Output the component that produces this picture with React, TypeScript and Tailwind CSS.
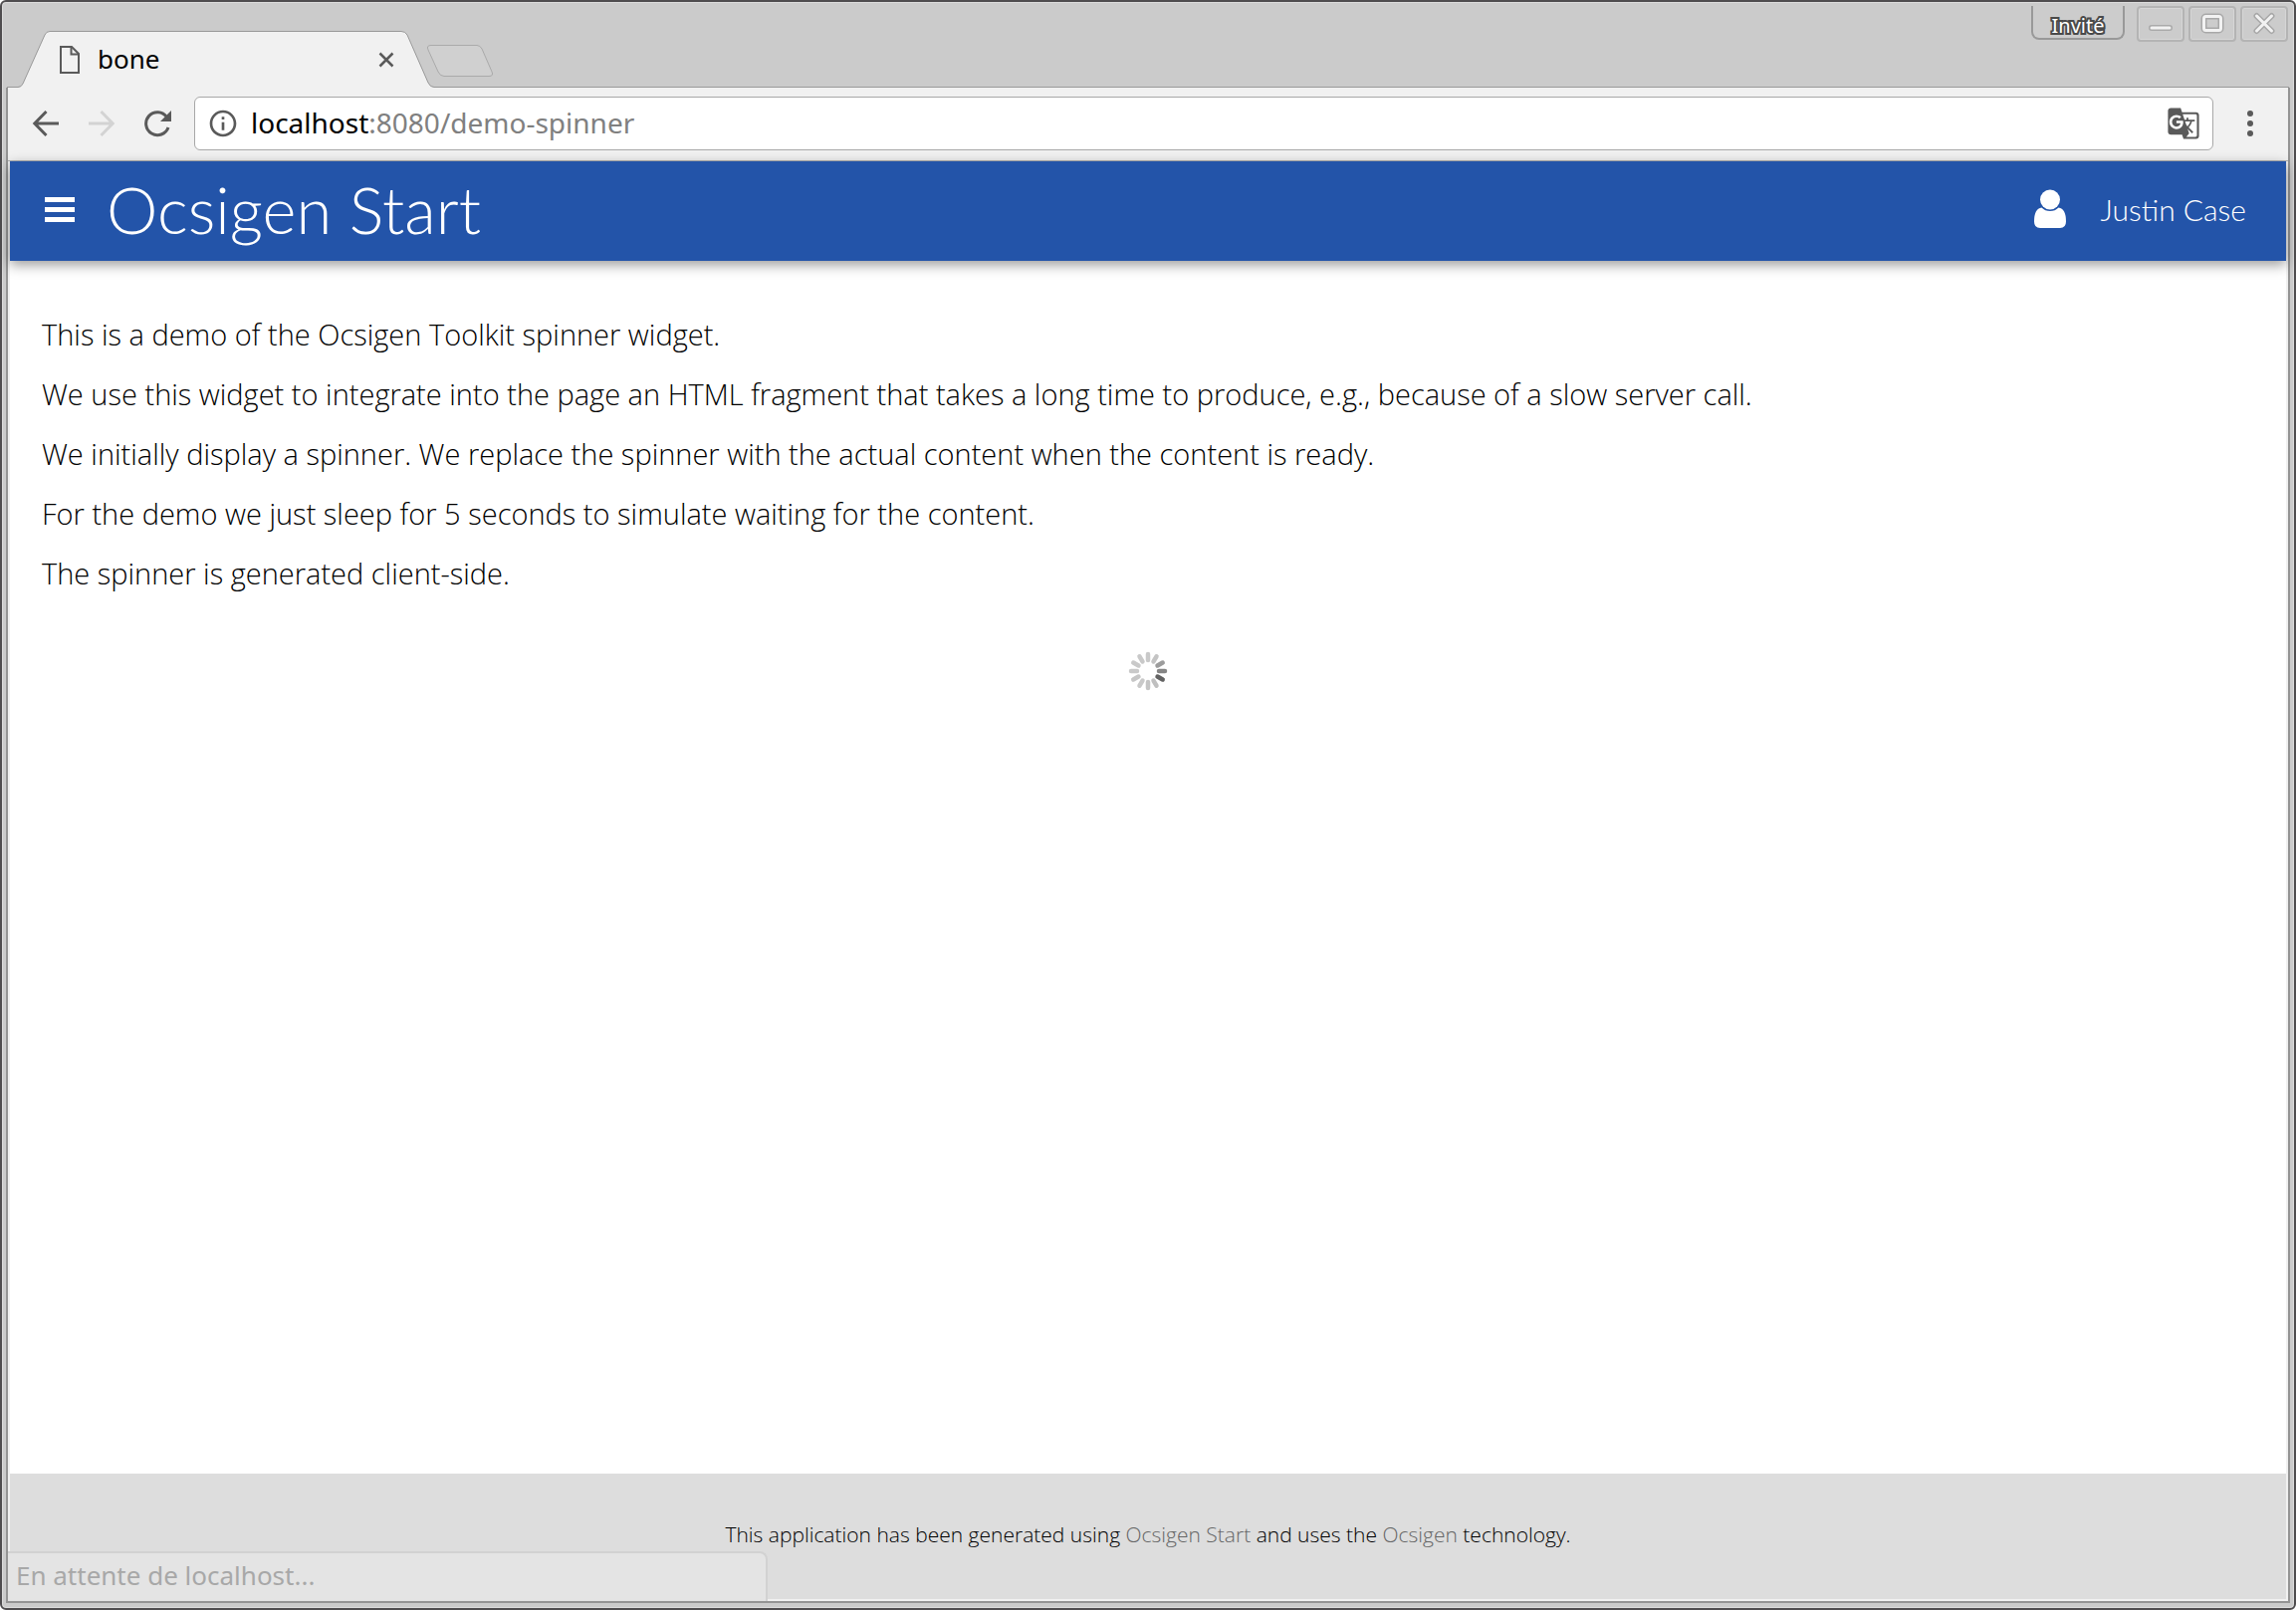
import React from "react";
import { MdGTranslate, MdInfoOutline } from "react-icons/md";

const paragraphs = [
  "This is a demo of the Ocsigen Toolkit spinner widget.",
  "We use this widget to integrate into the page an HTML fragment that takes a long time to produce, e.g., because of a slow server call.",
  "We initially display a spinner. We replace the spinner with the actual content when the content is ready.",
  "For the demo we just sleep for 5 seconds to simulate waiting for the content.",
  "The spinner is generated client-side.",
];

// One colour per spoke, clockwise from twelve o'clock.
const spokeColors = [
  "#c9c9c9", "#c4c4c4", "#9c9c9c", "#858585", "#626262", "#c0c0c0",
  "#c4c4c4", "#c9c9c9", "#c6c6c6", "#c9c9c9", "#c9c9c9", "#c9c9c9",
];

function Spinner() {
  return (
    <svg role="img" aria-label="Loading" className="size-10" viewBox="-20 -20 40 40">
      {spokeColors.map((color, i) => (
        <line key={i} x1="0" y1="-11" x2="0" y2="-17" stroke={color} strokeWidth="4.500" strokeLinecap="round" transform={`rotate(${i * 30})`} />
      ))}
    </svg>
  );
}

function WindowButton({ label, children }: { label: string; children: React.ReactNode }) {
  return (
    <button type="button" aria-label={label} className="flex h-9 w-12 items-center justify-center rounded-sm border-2 border-[#b4b4b4] bg-[#cccccc] shadow-[inset_0_0_0_1px_#d6d6d6]">
      <svg className="h-7 w-8" viewBox="0 0 32 28" fill="none" strokeLinejoin="round" strokeLinecap="round">
        {children}
      </svg>
    </button>
  );
}

function TitleBar() {
  return (
    <div className="relative mx-[5px] flex h-[86px] items-start justify-between border-b border-[#999999]">
      <svg className="absolute top-0 left-0 h-[86px] w-[495px]" viewBox="7 2 495 86" fill="none" aria-hidden="true">
        <path d="M7 87.500H18Q21.500 87.500 23 84L45 35Q46.500 31.500 50 31.500H403Q407 31.500 409 35L430 83Q432 87.500 436 87.500V88H7Z" fill="#f1f1f1" />
        <path d="M7 87.500H18Q21.500 87.500 23 84L45 35Q46.500 31.500 50 31.500H403Q407 31.500 409 35L430 83Q432 87.500 436 87.500" stroke="#999" />
        <path d="M433 45.500H479Q482 45.500 484 49L494 72Q496 76.500 491 76.500H446Q442 76.500 440 72L430 50Q428 45.500 433 45.500Z" fill="#d0d0d0" stroke="#aaa" />
      </svg>
      <div className="relative mt-[30px] flex h-14 w-[389px] items-center gap-[18px] pl-[53px]">
        <svg className="h-7 w-5 shrink-0" viewBox="0 0 20 28" fill="none" stroke="#5a5a5a" strokeWidth="2" aria-hidden="true">
          <path d="M1 1H12L19 8V27H1Z" />
          <path d="M11.500 1V8.500H19" />
        </svg>
        <span className="flex-1 pb-0.5 text-[26px] leading-9 text-black">bone</span>
        <button type="button" aria-label="Close tab" className="flex">
          <svg className="size-4" viewBox="0 0 16 16" fill="none" stroke="#5a5a5a" strokeWidth="2.500">
            <path d="M1.500 1.500L14.500 14.500M14.500 1.500L1.500 14.500" />
          </svg>
        </button>
      </div>
      <div className="mt-1 mr-px flex items-start gap-1">
        <button type="button" className="mr-2 h-[34px] w-[94px] rounded-b-lg border-2 border-t-0 border-[#999999] bg-[#cccccc] pt-1 text-[20px] leading-8 text-white [-webkit-text-stroke:4px_#4a4a4a] [paint-order:stroke_fill]">
          Invité
        </button>
        <WindowButton label="Minimize">
          <path d="M7 18H25" stroke="#aaaaaa" strokeWidth="6" />
          <path d="M7 18H25" stroke="#f2f2f2" strokeWidth="3" />
        </WindowButton>
        <WindowButton label="Maximize">
          <rect x="7.500" y="6.500" width="17" height="14" rx="2" stroke="#a8a8a8" strokeWidth="6" />
          <rect x="7.500" y="6.500" width="17" height="14" rx="2" stroke="#f2f2f2" strokeWidth="3" />
        </WindowButton>
        <WindowButton label="Close">
          <path d="M8.500 6L23.500 21M23.500 6L8.500 21" stroke="#a8a8a8" strokeWidth="6" />
          <path d="M8.500 6L23.500 21M23.500 6L8.500 21" stroke="#f2f2f2" strokeWidth="3" />
        </WindowButton>
      </div>
    </div>
  );
}

function Toolbar() {
  return (
    <div className="flex h-[74px] items-center border-b border-[#b0b0b0] bg-[#f1f1f1] pr-[35px] pb-0.5 pl-6">
      <div className="flex gap-7">
        <button type="button" aria-label="Back">
          <svg className="size-7" viewBox="0 0 28 28" fill="none" stroke="#5a5a5a" strokeWidth="3">
            <path d="M27 14H4M14.500 2L2.800 14L14.500 26" />
          </svg>
        </button>
        <button type="button" aria-label="Forward" disabled>
          <svg className="size-7" viewBox="0 0 28 28" fill="none" stroke="#d3d3d3" strokeWidth="3">
            <path d="M1 14H24M13.500 2L25.200 14L13.500 26" />
          </svg>
        </button>
        <button type="button" aria-label="Reload">
          <svg className="size-7" viewBox="0 0 28 28" fill="none">
            <path d="M23.500 7.500A11.500 11.500 0 1 0 25 18" stroke="#5a5a5a" strokeWidth="3" />
            <path d="M28 1V12H17Z" fill="#5a5a5a" />
          </svg>
        </button>
      </div>
      <div className="ml-[23px] flex h-[54px] flex-1 items-center rounded-md border border-[#a8a8a8] bg-white px-3">
        <MdInfoOutline className="size-8 shrink-0 text-[#5a5a5a]" />
        <div className="flex-1 pb-0.5 pl-3 text-[28px] leading-10 text-[#808080]">
          <span className="text-black">localhost</span>:8080/demo-spinner
        </div>
        <button type="button" aria-label="Translate this page">
          <MdGTranslate className="size-[34px] text-[#5a5a5a]" />
        </button>
      </div>
      <button type="button" aria-label="Menu" className="ml-[34px] flex flex-col gap-1">
        <span className="size-1.5 rounded-full bg-[#5a5a5a]" />
        <span className="size-1.5 rounded-full bg-[#5a5a5a]" />
        <span className="size-1.5 rounded-full bg-[#5a5a5a]" />
      </button>
    </div>
  );
}

function PageHeader() {
  return (
    <header className="relative flex h-[100px] items-center bg-[#2354a9] pr-10 pb-1 pl-[35px] font-['Lato',sans-serif] font-light text-white shadow-[0_4px_12px_rgba(0,0,0,0.4)]">
      <button type="button" aria-label="Open menu" className="flex flex-col gap-[5px]">
        <span className="h-[5px] w-[30px] bg-white" />
        <span className="h-[5px] w-[30px] bg-white" />
        <span className="h-[5px] w-[30px] bg-white" />
      </button>
      <h1 className="ml-8 text-[65px] leading-[80px]">Ocsigen Start</h1>
      <svg className="ml-auto h-10 w-8" viewBox="0 0 32 40" fill="white" aria-hidden="true">
        <circle cx="16" cy="10.500" r="10" />
        <path d="M7.500 18.500Q11 22 16 22Q21 22 24.500 18.500Q32 19.500 32 32.500Q32 39 26 39H6Q0 39 0 32.500Q0 19.500 7.500 18.500Z" />
      </svg>
      <span className="ml-[34px] text-[30px] leading-10">Justin Case</span>
    </header>
  );
}

export default function App() {
  return (
    <div className="min-h-screen bg-white font-['Noto_Sans',sans-serif]">
      <div className="flex min-h-screen flex-col rounded-md border-2 border-[#4f4d4f] bg-[#cbcbcb] shadow-[inset_0_0_0_1px_#dddddd]">
        <TitleBar />
        <div className="mx-1 mb-[5px] flex flex-1 flex-col border-x-2 border-b-2 border-[#949494]">
          <Toolbar />
          <div className="relative flex flex-1 flex-col bg-[#f1f1f1] px-0.5 pb-0.5">
            <PageHeader />
            <main className="flex flex-1 flex-col gap-5 bg-white px-8 pt-[54px] font-['Open_Sans',sans-serif] text-[29px] font-light text-black">
              {paragraphs.map((text) => (
                <p key={text} className="leading-10">{text}</p>
              ))}
              <div className="mt-[38px] flex justify-center">
                <Spinner />
              </div>
            </main>
            <footer className="flex h-[126px] items-center justify-center bg-[#dddddd] pb-1 font-['Open_Sans',sans-serif] text-[21px] font-light text-black">
              <p className="leading-8">
                This application has been generated using{" "}
                <a href="#start" className="text-[#666666]">Ocsigen Start</a> and uses the{" "}
                <a href="#ocsigen" className="text-[#666666]">Ocsigen</a> technology.
              </p>
            </footer>
            <div role="status" className="absolute bottom-0 left-0 h-[50px] w-1/3 rounded-tr-lg border-t-2 border-r-2 border-[#d2d2d2] bg-[#e4e4e4] pl-2 text-[26px] leading-[44px] text-[#a8a8a8]">
              En attente de localhost...
            </div>
          </div>
        </div>
      </div>
    </div>
  );
}
